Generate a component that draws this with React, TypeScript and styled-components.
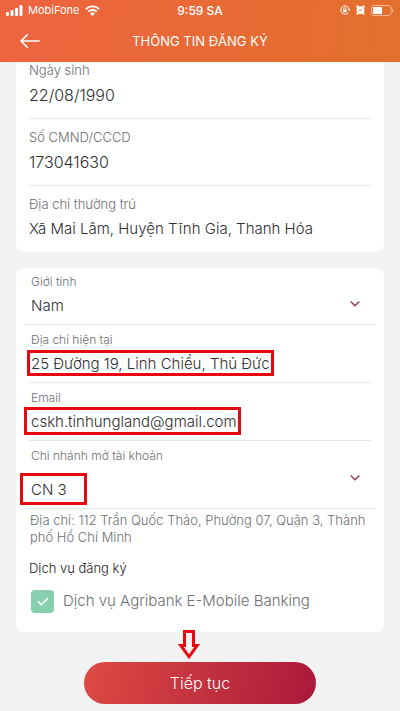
import React from 'react';
import styled, { createGlobalStyle } from 'styled-components';

const GlobalStyle = createGlobalStyle`
  * { box-sizing: border-box; }
  body {
    margin: 0;
    background: #f2f2f2;
    color: #2e2e30;
    font-family: Inter, Roboto, "Liberation Sans", sans-serif;
  }
  input, select, button { font: inherit; color: inherit; }
`;

const Screen = styled.div`
  display: flex;
  flex-direction: column;
  min-height: 100vh;
`;

const Header = styled.header`
  color: #fff;
  background: linear-gradient(100deg, #ee6340 0%, #e2702c 100%);
`;

const StatusBar = styled.div`
  display: grid;
  grid-template-columns: 1fr auto 1fr;
  align-items: center;
  height: 20px;
  padding: 0 6px;
  font-size: 11px;
`;

const StatusGroup = styled.div<{ $end?: boolean }>`
  display: flex;
  align-items: center;
  justify-content: ${(p) => (p.$end ? 'flex-end' : 'flex-start')};
  gap: ${(p) => (p.$end ? 6 : 5)}px;
`;

const Clock = styled.span`
  font-size: 12px;
  font-weight: 500;
`;

const NavBar = styled.div`
  display: grid;
  grid-template-columns: 40px 1fr 40px;
  align-items: center;
  height: 42px;
  padding: 0 10px;
`;

const BackButton = styled.button`
  display: flex;
  align-items: center;
  justify-content: center;
  height: 40px;
  padding: 0;
  border: 0;
  background: none;
`;

const Title = styled.h1`
  margin: 0;
  font-size: 13px;
  font-weight: 400;
  text-align: center;
`;

const Content = styled.main`
  display: flex;
  flex-direction: column;
  gap: 16px;
  padding: 0 16px;
`;

const Card = styled.section<{ $joined?: boolean }>`
  padding: ${(p) => (p.$joined ? '0 13px' : '0 8px 19px')};
  border-radius: ${(p) => (p.$joined ? '0 0 8px 8px' : '8px')};
  background: #fff;
`;

const Details = styled.dl`
  margin: 0;
`;

const Detail = styled.div`
  padding: 10px 0 11px;
  border-bottom: 1px solid #e9e9e9;
  &:first-child { padding-top: 0; }
  &:last-child { border-bottom: 0; }
`;

const DetailLabel = styled.dt`
  font-size: 13px;
  font-weight: 300;
  line-height: 16px;
  color: #6c6e72;
`;

const DetailValue = styled.dd<{ $numeric?: boolean }>`
  margin: 5px 0 0;
  font-size: ${(p) => (p.$numeric ? 16 : 15)}px;
  font-weight: 300;
  line-height: 24px;
`;

const Field = styled.div<{ $inset?: boolean; $first?: boolean }>`
  margin: 0 ${(p) => (p.$inset ? 5 : 0)}px;
  padding: ${(p) => (p.$first ? 6 : 7)}px ${(p) => (p.$inset ? 2 : 7)}px 7px;
  border-bottom: 1px solid #e9e9e9;
`;

const FieldLabel = styled.label`
  display: block;
  font-size: 12px;
  font-weight: 300;
  line-height: 16px;
  color: #6c6e72;
`;

const Control = styled.div<{ $spaced?: boolean }>`
  position: relative;
  margin-top: ${(p) => (p.$spaced ? 13 : 3)}px;
`;

const TextInput = styled.input`
  display: block;
  width: 100%;
  height: 24px;
  padding: 0;
  border: 0;
  outline: 0;
  background: none;
  font-size: 15px;
  font-weight: 300;
`;

const Select = styled.select`
  display: block;
  width: 100%;
  height: 24px;
  padding: 0;
  border: 0;
  outline: 0;
  background: none;
  appearance: none;
  font-size: 15px;
  font-weight: 300;
`;

const Chevron = styled.svg<{ $raised?: boolean }>`
  position: absolute;
  right: 8px;
  top: ${(p) => (p.$raised ? -3 : 7)}px;
  pointer-events: none;
`;

const Marker = styled.span<{ $start: number; $width: number; $height: number }>`
  position: absolute;
  left: -${(p) => p.$start}px;
  top: 50%;
  width: ${(p) => p.$width}px;
  height: ${(p) => p.$height}px;
  transform: translateY(-50%);
  border: 3px solid #e60a10;
  pointer-events: none;
`;

const Note = styled.p`
  margin: 3px 5px 0 6px;
  font-size: 13px;
  font-weight: 300;
  line-height: 17px;
  color: #6c6e72;
`;

const Subheading = styled.h2`
  margin: 13px 5px 0;
  font-size: 13px;
  font-weight: 300;
  line-height: 18px;
  color: #222;
`;

const Service = styled.label`
  display: flex;
  align-items: center;
  gap: 9px;
  margin: 12px 7px 0;
  font-size: 15px;
  font-weight: 300;
  line-height: 24px;
  color: #6c6e72;
`;

const CheckFrame = styled.span`
  display: grid;
  flex: none;
  width: 23px;
  height: 23px;
  place-items: center;
  border-radius: 4px;
  background: #87cfae;
  > * { grid-area: 1 / 1; }
`;

const Checkbox = styled.input`
  width: 23px;
  height: 23px;
  margin: 0;
  appearance: none;
`;

const Footer = styled.footer`
  display: flex;
  justify-content: center;
  padding: 30px 84px 7px;
`;

const SubmitWrap = styled.div`
  position: relative;
  flex: 1;
`;

const Submit = styled.button`
  width: 100%;
  height: 42px;
  border: 0;
  border-radius: 21px;
  color: #fff;
  background: linear-gradient(100deg, #dc4b42 0%, #ab193c 100%);
  font-size: 16px;
  font-weight: 300;
`;

const Arrow = styled.svg`
  position: absolute;
  bottom: 100%;
  left: 94px;
`;

function ChevronIcon({ raised }: { raised?: boolean }) {
  return (
    <Chevron $raised={raised} width="12" height="8" viewBox="0 0 12 8" fill="none" stroke="#a03355" strokeWidth="1.4" aria-hidden>
      <path d="M1.7 1.5 6 5.7l4.3-4.2" />
    </Chevron>
  );
}

const details = [
  { label: 'Ngày sinh', value: '22/08/1990', numeric: true },
  { label: 'Số CMND/CCCD', value: '173041630', numeric: true },
  { label: 'Địa chỉ thường trú', value: 'Xã Mai Lâm, Huyện Tĩnh Gia, Thanh Hóa', numeric: false },
];

export default function App() {
  return (
    <Screen>
      <GlobalStyle />
      <Header>
        <StatusBar>
          <StatusGroup>
            <svg width="17" height="11" viewBox="0 0 17 11" fill="#fff" aria-hidden>
              <rect x="0" y="7" width="3" height="4" rx="1" />
              <rect x="4.5" y="5" width="3" height="6" rx="1" />
              <rect x="9" y="2.7" width="3" height="8.3" rx="1" />
              <rect x="13.5" y="0" width="3" height="11" rx="1" />
            </svg>
            <span>MobiFone</span>
            <svg width="15" height="11" viewBox="0 0 15 11" fill="none" stroke="#fff" strokeWidth="1.9" aria-hidden>
              <path d="M.8 4.1a9.6 9.6 0 0 1 13.4 0M3.2 6.7a6.1 6.1 0 0 1 8.6 0" />
              <path d="M5 8.4a3.6 3.6 0 0 1 5 0L7.5 11Z" fill="#fff" stroke="none" />
            </svg>
          </StatusGroup>
          <Clock>9:59 SA</Clock>
          <StatusGroup $end>
            <svg width="10" height="10" viewBox="0 0 10 10" fill="none" stroke="#fff" aria-hidden>
              <path d="M8.4 7.6A4.2 4.2 0 1 1 9.2 4.6M7.8 4.2l1.4 1.3L10 3.8" />
              <path d="M3.7 4.7V3.8a1.1 1.1 0 0 1 2.2 0v.9" strokeWidth=".8" />
              <rect x="3" y="4.6" width="3.6" height="2.6" fill="#fff" stroke="none" />
            </svg>
            <svg width="9" height="10" viewBox="0 0 9 10" aria-hidden>
              <circle cx="4.5" cy="5.2" r="3.9" fill="#fff" />
              <path d="M.4 2.4 2.4.6M8.6 2.4 6.6.6M1.8 8.2.8 9.7M7.2 8.2l1 1.5" stroke="#fff" strokeWidth="1.5" />
              <path d="m6.2 3.7-1.7 2-1.6-.4" fill="none" stroke="#e56d33" strokeWidth=".9" />
            </svg>
            <svg width="23" height="11" viewBox="0 0 23 11" aria-hidden>
              <rect x=".5" y=".5" width="19.5" height="10" rx="2.4" fill="none" stroke="#fff" strokeOpacity=".5" />
              <rect x="2" y="2" width="9" height="7" rx="1" fill="#fff" />
              <path d="M21 3.7c2 .6 2 3 0 3.6Z" fill="#fff" fillOpacity=".5" />
            </svg>
          </StatusGroup>
        </StatusBar>
        <NavBar>
          <BackButton type="button" aria-label="Quay lại">
            <svg width="20" height="14" viewBox="0 0 20 14" fill="none" stroke="#fff" strokeWidth="1.6" strokeLinecap="round" strokeLinejoin="round" aria-hidden>
              <path d="M19.2 7H1M7.2.9 1 7l6.2 6.1" />
            </svg>
          </BackButton>
          <Title>THÔNG TIN ĐĂNG KÝ</Title>
        </NavBar>
      </Header>

      <Content>
        <Card $joined>
          <Details>
            {details.map((d) => (
              <Detail key={d.label}>
                <DetailLabel>{d.label}</DetailLabel>
                <DetailValue $numeric={d.numeric}>{d.value}</DetailValue>
              </Detail>
            ))}
          </Details>
        </Card>

        <Card>
          <Field $first>
            <FieldLabel htmlFor="gender">Giới tính</FieldLabel>
            <Control>
              <Select id="gender" defaultValue="Nam">
                <option>Nam</option>
              </Select>
              <ChevronIcon />
            </Control>
          </Field>
          <Field $inset>
            <FieldLabel htmlFor="address">Địa chỉ hiện tại</FieldLabel>
            <Control>
              <TextInput id="address" defaultValue="25 Đường 19, Linh Chiểu, Thủ Đức" />
              <Marker $start={4} $width={247} $height={26} />
            </Control>
          </Field>
          <Field $inset>
            <FieldLabel htmlFor="email">Email</FieldLabel>
            <Control>
              <TextInput id="email" type="email" defaultValue="cskh.tinhungland@gmail.com" />
              <Marker $start={7} $width={217} $height={28} />
            </Control>
          </Field>
          <Field>
            <FieldLabel htmlFor="branch">Chi nhánh mở tài khoản</FieldLabel>
            <Control $spaced>
              <Select id="branch" defaultValue="CN 3">
                <option>CN 3</option>
              </Select>
              <ChevronIcon raised />
              <Marker $start={11} $width={67} $height={32} />
            </Control>
          </Field>
          <Note>Địa chỉ: 112 Trần Quốc Thảo, Phường 07, Quận 3, Thành phố Hồ Chí Minh</Note>
          <Subheading>Dịch vụ đăng ký</Subheading>
          <Service>
            <CheckFrame>
              <Checkbox type="checkbox" defaultChecked />
              <svg width="12" height="9" viewBox="0 0 12 9" fill="none" stroke="#fff" strokeWidth="1.5" aria-hidden>
                <path d="m.8 4.3 3.4 3.4L11.2 1" />
              </svg>
            </CheckFrame>
            Dịch vụ Agribank E-Mobile Banking
          </Service>
        </Card>
      </Content>

      <Footer>
        <SubmitWrap>
          <Arrow width="22" height="32" viewBox="0 0 22 32" fill="#f2f2f2" stroke="#e60a10" strokeWidth="3" aria-hidden>
            <path d="M6.5 1.5h9v14h3.7L11 26.8 2.8 15.5h3.7Z" />
          </Arrow>
          <Submit type="button">Tiếp tục</Submit>
        </SubmitWrap>
      </Footer>
    </Screen>
  );
}
